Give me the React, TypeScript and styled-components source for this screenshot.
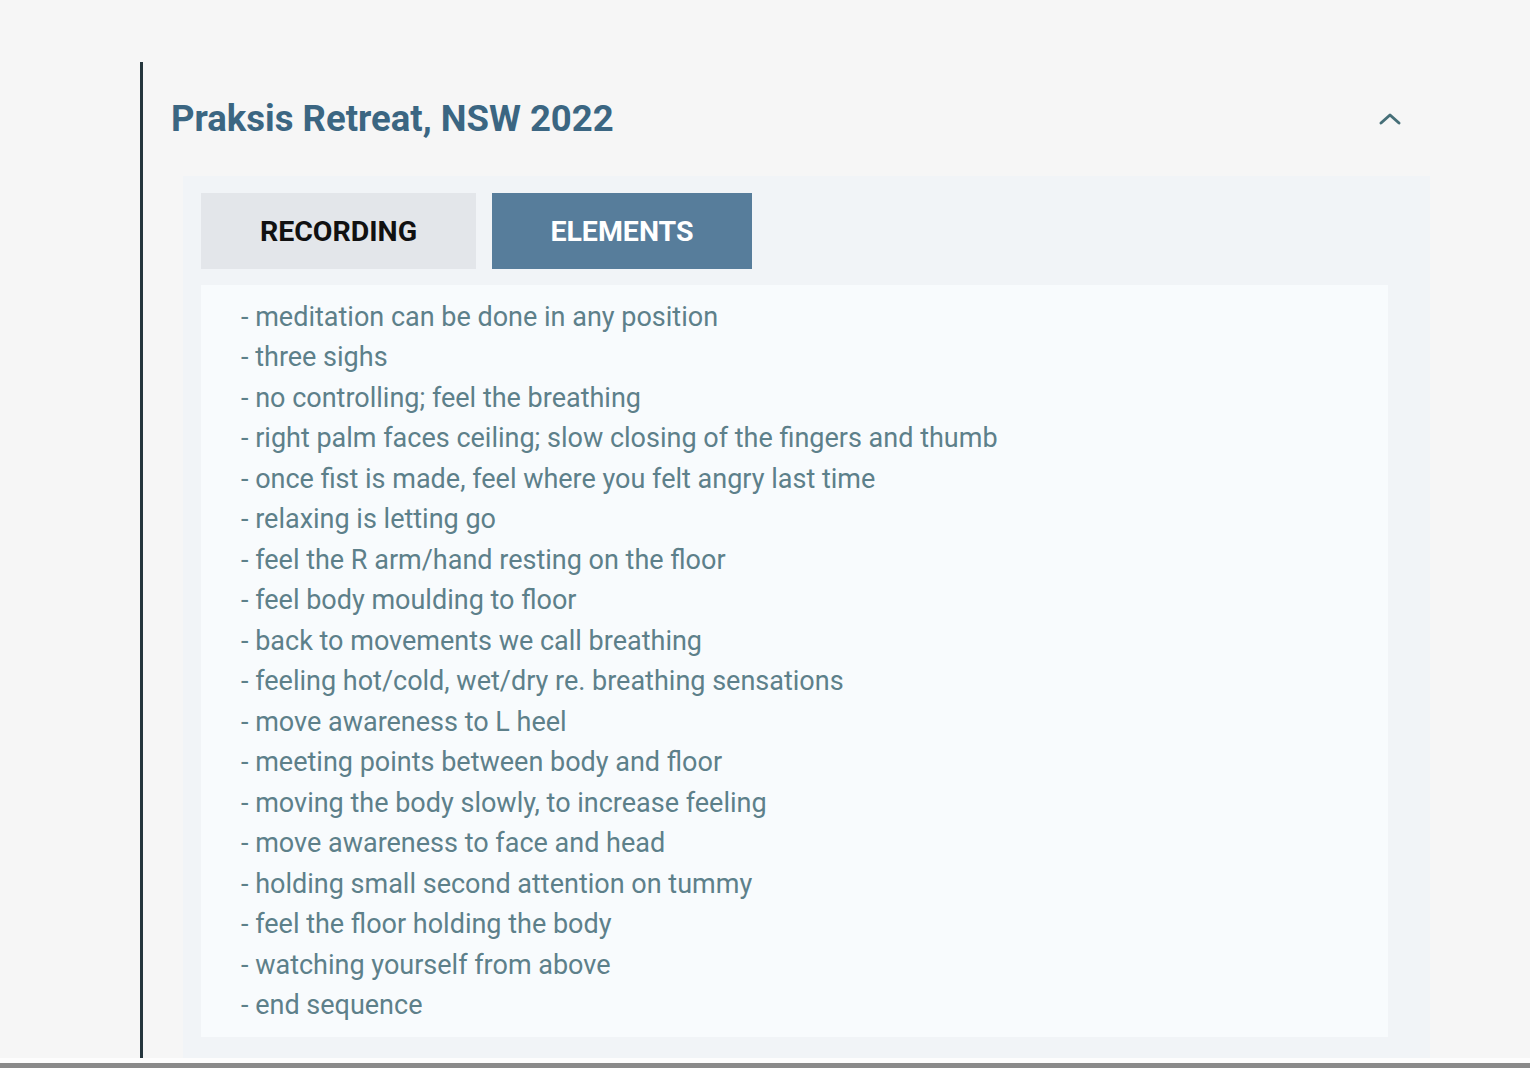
import React from "react";
import styled, { createGlobalStyle } from "styled-components";

const items = [
  "meditation can be done in any position",
  "three sighs",
  "no controlling; feel the breathing",
  "right palm faces ceiling; slow closing of the fingers and thumb",
  "once fist is made, feel where you felt angry last time",
  "relaxing is letting go",
  "feel the R arm/hand resting on the floor",
  "feel body moulding to floor",
  "back to movements we call breathing",
  "feeling hot/cold, wet/dry re. breathing sensations",
  "move awareness to L heel",
  "meeting points between body and floor",
  "moving the body slowly, to increase feeling",
  "move awareness to face and head",
  "holding small second attention on tummy",
  "feel the floor holding the body",
  "watching yourself from above",
  "end sequence",
];

const App: React.FC = () => {
  return (
    <Page>
      <GlobalStyle />
      <Main>
        <Section>
          <Header>
            <Title>Praksis Retreat, NSW 2022</Title>
            <Toggle aria-label="collapse">
              <svg width="24" height="24" viewBox="0 0 24 24" fill="none">
                <path
                  d="M3 16 L12 8 L21 16"
                  stroke="#466f78"
                  strokeWidth="3"
                  strokeLinecap="round"
                  strokeLinejoin="round"
                />
              </svg>
            </Toggle>
          </Header>
          <Panel>
            <Tabs>
              <Tab $width={275}>RECORDING</Tab>
              <Tab $width={260} $active>
                ELEMENTS
              </Tab>
            </Tabs>
            <Content>
              {items.map((t) => (
                <Line key={t}>- {t}</Line>
              ))}
            </Content>
          </Panel>
        </Section>
      </Main>
      <Footer />
    </Page>
  );
};

export default App;

const GlobalStyle = createGlobalStyle`
  html, body {
    margin: 0;
    padding: 0;
    background: #f6f6f6;
    font-family: Roboto, "Liberation Sans", sans-serif;
  }
`;

const Page = styled.div`
  height: 1068px;
  display: flex;
  flex-direction: column;
  overflow: hidden;
`;

const Main = styled.div`
  flex: 1;
  padding: 62px 100px 0 140px;
`;

const Section = styled.section`
  border-left: 3px solid #25363d;
  padding-left: 28px;
  width: 1262px;
`;

const Header = styled.div`
  height: 114px;
  display: flex;
  align-items: center;
  justify-content: space-between;
  padding-right: 31px;
  box-sizing: border-box;
`;

const Title = styled.h2`
  margin: 0;
  padding-bottom: 2px;
  font-size: 36.5px;
  font-weight: 700;
  color: #3b6682;
`;

const Toggle = styled.button`
  border: none;
  background: transparent;
  padding: 0;
  display: flex;
  cursor: pointer;
`;

const Panel = styled.div`
  margin-left: 12px;
  width: 1247px;
  box-sizing: border-box;
  background: #f1f4f7;
  padding: 17px 42px 21px 18px;
`;

const Tabs = styled.div`
  display: flex;
  gap: 16px;
  margin-bottom: 16px;
`;

const Tab = styled.button<{ $active?: boolean; $width: number }>`
  width: ${(p) => p.$width}px;
  height: 76px;
  border: none;
  padding: 0;
  font-family: Roboto, "Liberation Sans", sans-serif;
  font-size: 28.5px;
  font-weight: 700;
  background: ${(p) => (p.$active ? "#577d9b" : "#e3e6ea")};
  color: ${(p) => (p.$active ? "#ffffff" : "#111111")};
  cursor: pointer;
`;

const Content = styled.div`
  background: #f8fbfd;
  padding: 12px 40px 12px 40px;
`;

const Line = styled.div`
  font-size: 27px;
  line-height: 40.47px;
  color: #5d808a;
`;

const Footer = styled.div`
  flex: none;
  height: 5px;
  background: #8a8a8a;
  border-top: 5px solid #fdfdfd;
`;
